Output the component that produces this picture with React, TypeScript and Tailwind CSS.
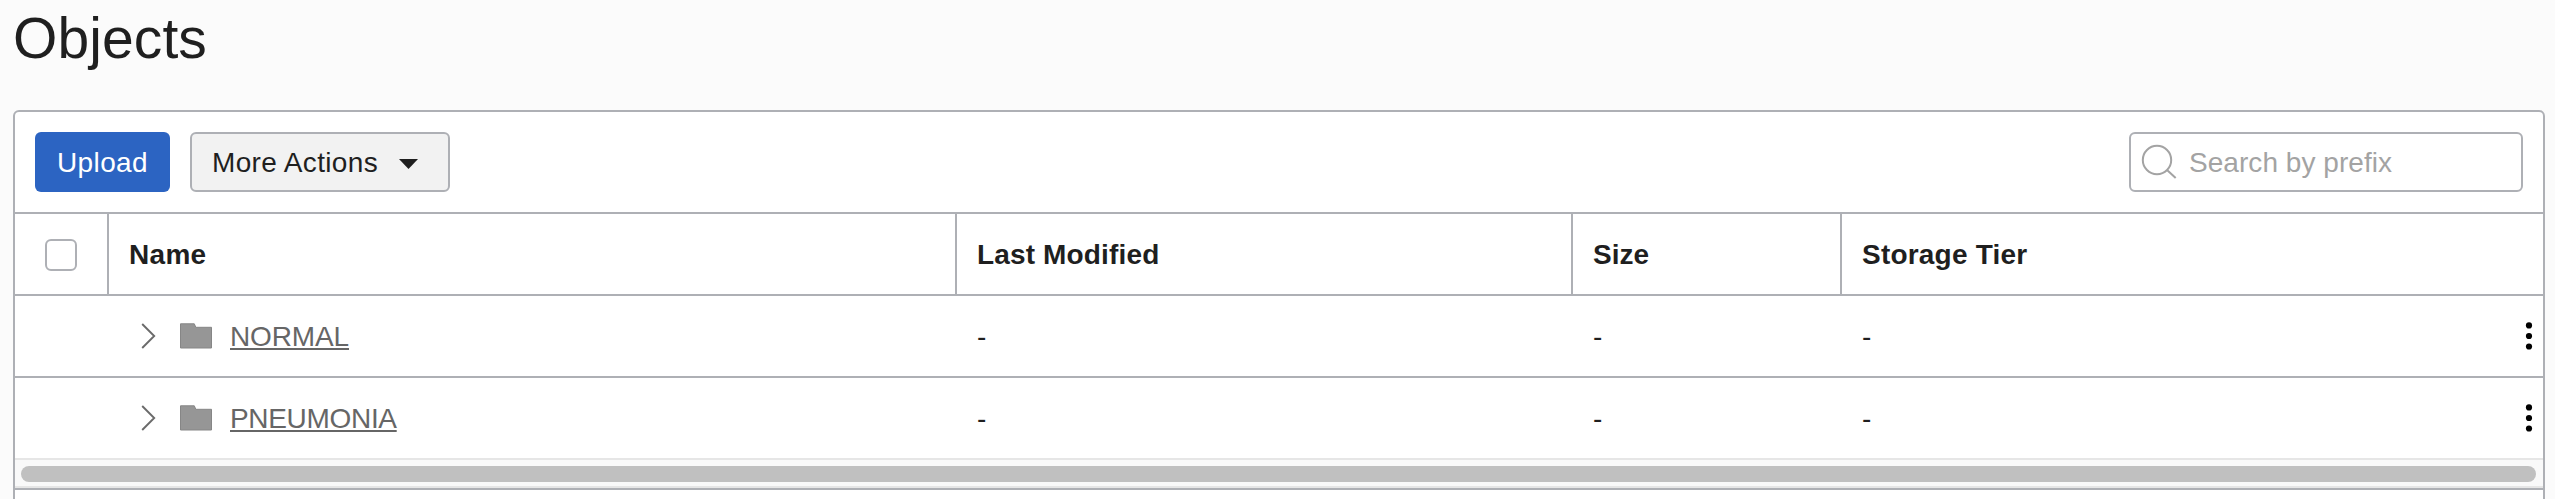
const columns = [
  { label: "Last Modified", width: "w-[616px]", spacing: "tracking-[0.15px]" },
  { label: "Size", width: "w-[269px]", spacing: "" },
  { label: "Storage Tier", width: "flex-1", spacing: "tracking-[0.2px]" },
];

const rows = [
  { name: "NORMAL", spacing: "tracking-[-0.13px]" },
  { name: "PNEUMONIA", spacing: "tracking-[-0.32px]" },
];

function SearchIcon() {
  return (
    <svg className="ml-2.5 h-9 w-9 shrink-0" viewBox="0 0 36 36" fill="none" stroke="#a3a3a3" strokeWidth="2">
      <circle cx="16" cy="16" r="14.2" />
      <path d="M26 26L34.7 34" />
    </svg>
  );
}

function ChevronIcon() {
  return (
    <svg className="h-7 w-4" viewBox="0 0 16 28" fill="none" stroke="#6b6b6b" strokeWidth="1.9">
      <path d="M2.2 2L14.2 14L2.2 26" />
    </svg>
  );
}

function FolderIcon() {
  return (
    <svg className="h-7 w-8" viewBox="0 0 32 28" fill="#969696" stroke="#868686" strokeWidth="1">
      <path d="M.5 1.8H14.3L15.8 5.3H31.5V26H.5Z" />
    </svg>
  );
}

function MoreIcon() {
  return (
    <svg className="h-7 w-2" viewBox="0 0 8 28" fill="#000">
      <circle cx="4" cy="3.4" r="3.1" />
      <circle cx="4" cy="14" r="3.1" />
      <circle cx="4" cy="24.5" r="3.1" />
    </svg>
  );
}

export default function App() {
  return (
    <div className="flex h-[499px] w-[2555px] flex-col overflow-hidden bg-[#fbfbfb] pr-2.5 pl-[13px] font-['Liberation_Sans',Arial,sans-serif] text-[28px] leading-8 text-[#1f1f1f]">
      <h1 className="h-[110px] shrink-0 pt-1.5 text-[57px] leading-[64px] tracking-[0.1px]">Objects</h1>
      <main className="flex h-[420px] shrink-0 flex-col rounded-t-md border-2 border-[#aeb0b5] bg-white">
        <div className="flex h-[102px] shrink-0 items-center justify-between border-b-2 border-[#aeb0b5] px-5">
          <div className="flex gap-5">
            <button className="h-[60px] w-[135px] rounded-md bg-[#2c64c2] pt-0.5 tracking-[0.4px] text-white">Upload</button>
            <button className="flex h-[60px] w-[260px] items-center rounded-md border-2 border-[#aeb0b5] bg-[#f2f2f2] pl-5">
              <span className="w-[187px] pt-0.5 text-left tracking-[0.35px]">More Actions</span>
              <svg className="mt-1 h-2.5 w-[19px]" viewBox="0 0 19 10" fill="#1f1f1f">
                <path d="M0 0H19L9.5 10Z" />
              </svg>
            </button>
          </div>
          <label className="flex h-[60px] w-[394px] items-center rounded-md border-2 border-[#aeb0b5]">
            <SearchIcon />
            <input
              className="ml-3 w-[300px] pt-0.5 tracking-[0.05px] outline-none placeholder:text-[#a3a3a3] placeholder:opacity-100"
              placeholder="Search by prefix"
            />
          </label>
        </div>
        <div className="flex h-[82px] shrink-0 border-b-2 border-[#aeb0b5] font-bold">
          <div className="flex w-[94px] items-center border-r-2 border-[#aeb0b5] pt-0.5 pl-[30px]">
            <span className="h-8 w-8 rounded-md border-2 border-[#aeb0b5]" />
          </div>
          <div className="flex w-[848px] items-center border-r-2 border-[#aeb0b5] pt-0.5 pl-5 tracking-[0.3px]">Name</div>
          {columns.map((c, i) => (
            <div
              key={c.label}
              className={`flex items-center pt-0.5 pl-5 ${c.width} ${c.spacing} ${i < 2 ? "border-r-2 border-[#aeb0b5]" : ""}`}
            >
              {c.label}
            </div>
          ))}
        </div>
        {rows.map((r, i) => (
          <div key={r.name} className={`flex shrink-0 ${i === 0 ? "h-[82px] border-b-2 border-[#aeb0b5]" : "h-20"}`}>
            <div className="flex w-[942px] items-center pl-[125px]">
              <ChevronIcon />
              <div className="pl-6">
                <FolderIcon />
              </div>
              <a
                className={`ml-[18px] pt-0.5 text-[#666] underline decoration-2 underline-offset-[2px] [text-decoration-skip-ink:none] ${r.spacing}`}
              >
                {r.name}
              </a>
            </div>
            <div className="flex w-[616px] items-center pt-0.5 pl-5">-</div>
            <div className="flex w-[269px] items-center pt-0.5 pl-5">-</div>
            <div className="flex flex-1 items-center justify-between pr-2.5 pl-5">
              <span className="pt-0.5">-</span>
              <MoreIcon />
            </div>
          </div>
        ))}
        <div className="h-[30px] shrink-0 border-y-2 border-[#e6e6e6] bg-[#f9f9f9] pt-1.5 pr-[7px] pl-1.5">
          <div className="h-4 rounded-full bg-[#c0c0c0]" />
        </div>
        <div className="h-0.5 shrink-0 bg-[#aeb0b5]" />
      </main>
    </div>
  );
}
